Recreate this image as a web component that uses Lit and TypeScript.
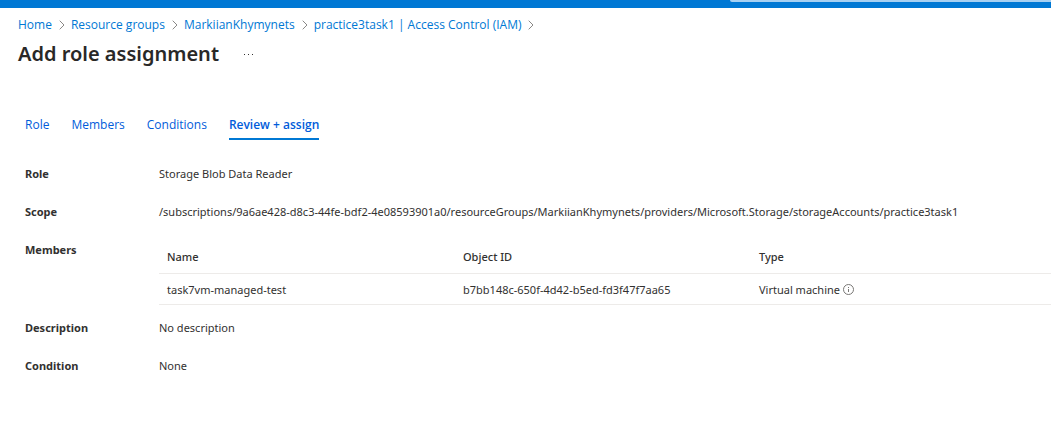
import { LitElement, html, css } from "lit";
import { customElement } from "lit/decorators.js";

@customElement("app-root")
export class AppRoot extends LitElement {
  static styles = css`
    :host { display: block; min-height: 100vh; background: #fff; color: #323130; font: 11px/16px "Noto Sans", sans-serif; overflow-x: hidden; }
    * { box-sizing: border-box; }
    .topbar { height: 8px; background: #0078d4; display: flex; justify-content: flex-end; }
    .search { width: 321px; height: 2px; background: #a6d0f2; border-radius: 0 0 0 2px; }
    a { color: #015cda; text-decoration: none; }
    .crumbs { display: flex; align-items: center; padding: 8px 18px 0; font: 12px/17px "Open Sans", sans-serif; white-space: nowrap; }
    .crumbs a { color: #0078d4; }
    .chevron { width: 6px; height: 10px; margin: 0 6px 0 7px; fill: none; stroke: #8a8886; }
    .heading { display: flex; align-items: center; gap: 20px; padding: 7px 18px 0; }
    h1 { margin: 0; font-size: 20px; line-height: 28px; font-weight: 600; color: #292827; }
    .more { border: 0; background: none; padding: 4px; display: flex; }
    .more svg { width: 12px; height: 8px; fill: #323130; }
    .tabs { display: flex; gap: 22px; padding: 49px 25px 0; font: 12px/16px "Open Sans", sans-serif; }
    .tab { padding-bottom: 5px; border-bottom: 2px solid transparent; }
    .active { font-weight: 600; border-color: #0078d4; }
    dl { margin: 26px 0 0; padding-left: 25px; display: grid; grid-template-columns: 134px minmax(0, 1fr); row-gap: 22px; }
    dt { font-weight: 700; }
    dd { margin: 0; }
    .members { margin-bottom: -7px; }
    table { width: 100%; border-collapse: collapse; table-layout: fixed; }
    th, td { text-align: left; font-weight: 400; padding: 7px 8px; border-bottom: 1px solid #edebe9; }
    th { font-weight: 500; height: 31px; }
    th:not(:last-child) { width: 296px; }
    td { height: 31px; padding: 8px 8px 6px; }
    .kind { display: flex; align-items: center; gap: 3px; }
    .info { width: 11px; height: 11px; fill: none; stroke: #797775; }
  `;

  crumbs = ["Home", "Resource groups", "MarkiianKhymynets", "practice3task1 | Access Control (IAM)"];
  tabs = ["Role", "Members", "Conditions", "Review + assign"];

  render() {
    return html`
      <header class="topbar"><div class="search"></div></header>
      <nav class="crumbs" aria-label="Breadcrumb">
        ${this.crumbs.map((c) => html`<a href="#">${c}</a><svg class="chevron" viewBox="0 0 6 10"><path d="M.7.7 5 5 .7 9.3" /></svg>`)}
      </nav>
      <div class="heading">
        <h1>Add role assignment</h1>
        <button class="more" aria-label="More"><svg viewBox="0 0 12 8"><path d="M1 4h1v1H1zM5 4h1v1H5zM9 4h1v1H9z" /></svg></button>
      </div>
      <nav class="tabs" aria-label="Steps">
        ${this.tabs.map((t, i) => html`<a href="#" class="tab ${i === 3 ? "active" : ""}">${t}</a>`)}
      </nav>
      <dl>
        <dt>Role</dt><dd>Storage Blob Data Reader</dd>
        <dt>Scope</dt><dd>/subscriptions/9a6ae428-d8c3-44fe-bdf2-4e08593901a0/resourceGroups/MarkiianKhymynets/providers/Microsoft.Storage/storageAccounts/practice3task1</dd>
        <dt>Members</dt>
        <dd class="members">
          <table>
            <thead><tr><th>Name</th><th>Object ID</th><th>Type</th></tr></thead>
            <tbody><tr><td>task7vm-managed-test</td><td>b7bb148c-650f-4d42-b5ed-fd3f47f7aa65</td>
              <td><span class="kind">Virtual machine <svg class="info" viewBox="0 0 11 11"><circle cx="5.5" cy="5.5" r="5" /><path d="M5.5 5v3M5.5 3v1" /></svg></span></td></tr></tbody>
          </table>
        </dd>
        <dt>Description</dt><dd>No description</dd>
        <dt>Condition</dt><dd>None</dd>
      </dl>
    `;
  }
}
